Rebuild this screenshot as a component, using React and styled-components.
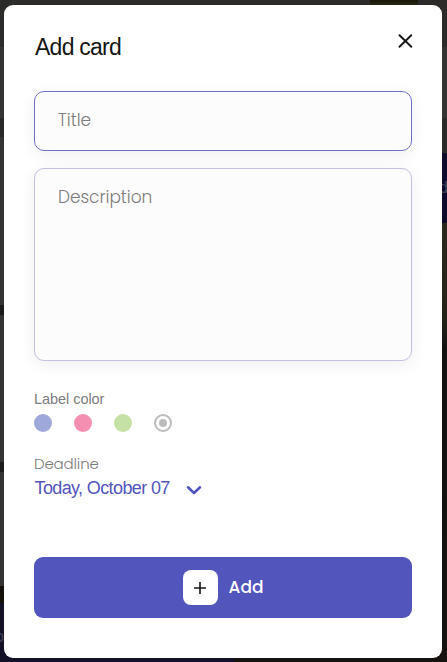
import React from "react";
import styled, { createGlobalStyle } from "styled-components";

const GlobalStyle = createGlobalStyle`
  * { box-sizing: border-box; }
  body { margin: 0; overflow: hidden; background: #2b2a29; }
`;

const Backdrop = styled.div`
  position: relative;
  width: 447px;
  height: 662px;
  padding: 5px 5px 4px 4px;
  overflow: hidden;
  font-family: "Liberation Sans", Arial, sans-serif;
  background:
    linear-gradient(#181609, #272718) 370px 0 / 48px 5px no-repeat,
    linear-gradient(90deg, #131128 234px, #16120f 234px) 0 652px / 442px 10px no-repeat,
    linear-gradient(#2b2b2a 47px, #353433 47px 118px, #292826 118px 137px, #363432 137px 305px,
      #1c1a18 305px 315px, #363432 315px 462px, #1d1b19 462px 472px, #363432 472px 586px,
      #14110a 586px 603px, #131128 603px) 0 0 / 12px 662px no-repeat,
    linear-gradient(#2c2b2a 47px, #353433 47px 118px, #2a2a29 118px 153px, #0c0b2b 153px 223px,
      #2d2721 223px, #25221b 320px, #12110f 350px, #16120f 662px) 435px 0 / 12px 662px no-repeat,
    #2c2b2a;
`;

const BackdropLetter = styled.span`
  position: absolute;
  left: ${(p) => p.$x}px;
  top: ${(p) => p.$y}px;
  font-size: 16px;
  line-height: 18px;
  color: #45455a;
`;

const Modal = styled.form`
  position: relative;
  display: flex;
  flex-direction: column;
  height: 653px;
  padding: 30px 30px 40px;
  border-radius: 9px;
  background: #fff;
`;

const Header = styled.header`
  display: flex;
  justify-content: space-between;
  align-items: flex-start;
  height: 56px;
`;

const Heading = styled.h2`
  margin: 0 0 0 1px;
  font-size: 23px;
  font-weight: 400;
  line-height: 24px;
  letter-spacing: -0.75px;
  color: #161616;
`;

const CloseButton = styled.button`
  display: flex;
  margin: -1px -1px 0 0;
  padding: 0;
  border: 0;
  background: none;
`;

const fieldBase = `
  display: block;
  width: 100%;
  padding: 15px 23px;
  border-radius: 10px;
  background: #fcfcfc;
  box-shadow: 0 4px 16px rgba(22, 22, 22, 0.07);
  font: 300 17px/26px Poppins, Inter, sans-serif;
  letter-spacing: -0.05px;
  outline: none;
  resize: none;
  &::placeholder { color: #7c7c7c; opacity: 1; }
`;

const TitleInput = styled.input`
  ${fieldBase}
  height: 60px;
  padding-bottom: 17px;
  border: 1px solid #6f70c4;
`;

const DescriptionArea = styled.textarea`
  ${fieldBase}
  height: 193px;
  margin-top: 17px;
  border: 1px solid #c2c0df;
`;

const FieldLabel = styled.div`
  margin-top: ${(p) => p.$gap}px;
  height: 18px;
  font-family: ${(p) => (p.$rounded ? "Poppins, Inter, sans-serif" : "inherit")};
  font-weight: ${(p) => (p.$rounded ? 300 : 400)};
  font-size: ${(p) => (p.$rounded ? 15 : 14.5)}px;
  letter-spacing: ${(p) => (p.$rounded ? -0.15 : -0.05)}px;
  line-height: 18px;
  color: #7c7c7c;
`;

const Swatches = styled.div`
  display: flex;
  gap: 22px;
  margin-top: 6px;
`;

const Swatch = styled.span`
  display: flex;
  width: 18px;
  height: 18px;
  border-radius: 50%;
  background: ${(p) => p.$color};
`;

const SelectedSwatch = styled(Swatch)`
  align-items: center;
  justify-content: center;
  border: 2px solid ${(p) => p.$color};
  background: none;
  &::before {
    content: "";
    width: 8px;
    height: 8px;
    border-radius: 50%;
    background: ${(p) => p.$color};
  }
`;

const DateButton = styled.button`
  display: flex;
  align-items: center;
  align-self: flex-start;
  gap: 16px;
  height: 22px;
  margin-top: 4px;
  padding: 0 0 0 0.5px;
  border: 0;
  background: none;
  font: 400 18px/22px "Liberation Sans", Arial, sans-serif;
  letter-spacing: -0.62px;
  color: #5255bc;
  svg { margin-top: 4px; }
`;

const SubmitButton = styled.button`
  display: flex;
  align-items: center;
  justify-content: center;
  gap: 11px;
  height: 61px;
  margin-top: auto;
  padding: 0;
  border: 0;
  border-radius: 9px;
  background: #5255bc;
  color: #fff;
  font: 500 17px/24px Poppins, Inter, sans-serif;
`;

const PlusBox = styled.span`
  display: flex;
  align-items: center;
  justify-content: center;
  width: 35px;
  height: 35px;
  border-radius: 8px;
  background: #fff;
`;

const SubmitText = styled.span`
  margin-top: -1px;
`;

const labelColors = ["#9fa8da", "#f48fb1", "#c5e1a5"];

export default function App() {
  return (
    <>
      <GlobalStyle />
      <Backdrop>
        <BackdropLetter $x={439} $y={179}>d</BackdropLetter>
        <BackdropLetter $x={-5} $y={628}>o</BackdropLetter>
        <Modal>
          <Header>
            <Heading>Add card</Heading>
            <CloseButton type="button" aria-label="Close">
              <svg width="15" height="15" viewBox="0 0 15 15" fill="none" stroke="#161616" strokeWidth="1.9" strokeLinecap="round">
                <path d="M1.5 1.2 13.3 12.8M13.3 1.2 1.5 12.8" />
              </svg>
            </CloseButton>
          </Header>
          <TitleInput placeholder="Title" />
          <DescriptionArea placeholder="Description" />
          <FieldLabel $gap={29}>Label color</FieldLabel>
          <Swatches>
            {labelColors.map((color) => (
              <Swatch key={color} $color={color} />
            ))}
            <SelectedSwatch $color="#bcbcbc" />
          </Swatches>
          <FieldLabel $gap={23} $rounded>Deadline</FieldLabel>
          <DateButton type="button">
            Today, October 07
            <svg width="16" height="10" viewBox="0 0 16 10" fill="none" stroke="#5255bc" strokeWidth="2.6" strokeLinecap="round" strokeLinejoin="round">
              <path d="M2 2.3 8 8 14 2.3" />
            </svg>
          </DateButton>
          <SubmitButton type="button">
            <PlusBox>
              <svg width="14" height="14" viewBox="0 0 14 14" fill="none" stroke="#161616" strokeWidth="1.6">
                <path d="M7 1v12M1 7h12" />
              </svg>
            </PlusBox>
            <SubmitText>Add</SubmitText>
          </SubmitButton>
        </Modal>
      </Backdrop>
    </>
  );
}
